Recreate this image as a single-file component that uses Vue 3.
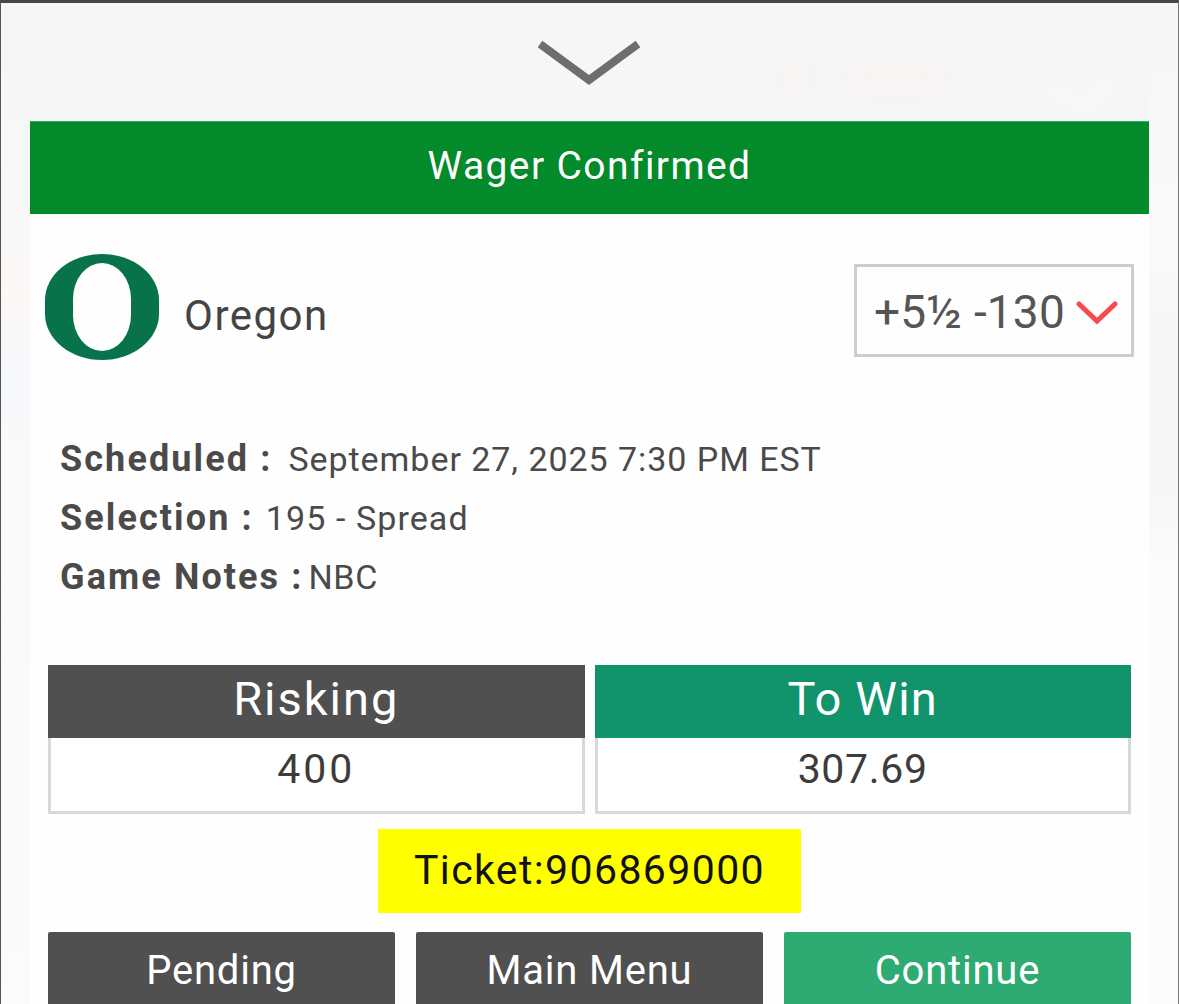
<script setup>
const details = [
  { label: 'Scheduled :', value: 'September 27, 2025 7:30 PM EST', cls: 'v1' },
  { label: 'Selection :', value: '195 - Spread', cls: 'v2' },
  { label: 'Game Notes :', value: 'NBC', cls: 'v3' }
]
const buttons = [
  { text: 'Pending', cls: '' },
  { text: 'Main Menu', cls: '' },
  { text: 'Continue', cls: 'go' }
]
</script>

<template>
  <div class="screen">
    <div class="handle">
      <svg class="ghosts" width="1177" height="118" viewBox="0 0 1177 118" aria-hidden="true">
        <g fill="none" stroke="#f8f8f8" stroke-width="6">
          <path d="M44 130 V90 C44 30 162 30 162 90 V130" />
          <path d="M255 110 C255 10 365 10 365 110 Z" />
          <path d="M435 100 C435 30 545 30 545 100 V130" />
        </g>
        <g fill="#f8f4f3">
          <rect x="783" y="52" width="22" height="46" rx="8" />
          <rect x="848" y="60" width="92" height="30" rx="10" />
        </g>
        <path d="M1046 84 L1082 104 L1112 78" fill="none" stroke="#f9f9f9" stroke-width="14" />
      </svg>
      <svg class="chev" width="104" height="50" viewBox="0 0 104 50">
        <path d="M2 5 L51 41 L100 5" fill="none" stroke="#6e6e6e" stroke-width="8" />
      </svg>
    </div>
    <main class="sheet">
      <h1 class="banner">Wager Confirmed</h1>
      <section class="card">
        <div class="team-row">
          <div class="team">
            <svg class="logo" width="114" height="106" viewBox="0 0 114 106">
              <rect x="0" y="0" width="114" height="106" rx="57" ry="46" fill="#08724a" />
              <rect x="28" y="9" width="58" height="88" rx="29" ry="36" fill="#fefefe" />
            </svg>
            <span class="team-name">Oregon</span>
          </div>
          <div class="odds">
            <span>+5½ -130</span>
            <svg width="42" height="26" viewBox="0 0 42 26">
              <path d="M3 4 L21 21 L39 4" fill="none" stroke="#f9494f" stroke-width="5" stroke-linecap="round" />
            </svg>
          </div>
        </div>
        <dl class="details">
          <div v-for="d in details" :key="d.label" class="line">
            <dt>{{ d.label }}</dt>
            <dd :class="d.cls">{{ d.value }}</dd>
          </div>
        </dl>
        <div class="amounts">
          <div class="amount">
            <div class="amount-head">Risking</div>
            <div class="amount-val wide">400</div>
          </div>
          <div class="amount">
            <div class="amount-head win">To Win</div>
            <div class="amount-val">307.69</div>
          </div>
        </div>
        <div class="ticket">Ticket:906869000</div>
        <div class="actions">
          <button v-for="b in buttons" :key="b.text" class="btn" :class="b.cls">{{ b.text }}</button>
        </div>
      </section>
    </main>
  </div>
</template>

<style>
html, body { margin: 0; height: 100%; background: #f6f6f6; overflow: hidden; }
</style>

<style scoped>
.screen {
  box-sizing: border-box;
  width: 1179px;
  height: 1004px;
  overflow: hidden;
  background:
    linear-gradient(180deg, #f6f6f6 0, #f8f8f8 214px, #fdf7f6 290px, #f6f8fc 370px, #f9f9fa 440px, #fbfbfb 1004px) left top / 30px 100% no-repeat,
    linear-gradient(180deg, #f6f6f6 0, #fafafa 250px, #f6f6f6 330px, #f6f6f6 470px, #fbfbfb 560px) right top / 30px 100% no-repeat,
    #f6f6f6;
  border-top: 3px solid #464646;
  border-left: 1px solid #555;
  border-right: 1px solid #777;
  font-family: Roboto, "Liberation Sans", sans-serif;
  color: #4a4a4a;
}
.handle {
  position: relative;
  height: 118px;
  display: flex;
  justify-content: center;
  padding-top: 36px;
  box-sizing: border-box;
}
.ghosts {
  position: absolute;
  left: 0;
  top: 0;
  filter: blur(6px);
}
.chev { position: relative; }
.sheet { margin: 0 29px; position: relative; }
.banner {
  margin: 0;
  height: 93px;
  box-sizing: border-box;
  border-top: 1px solid #2fae58;
  background: #038a2a;
  color: #fff;
  font-size: 39px;
  font-weight: 400;
  letter-spacing: 1.4px;
  padding-bottom: 4px;
  display: flex;
  align-items: center;
  justify-content: center;
}
.card {
  background: #fefefe;
  height: 800px;
  padding: 40px 15px 0 15px;
  box-sizing: border-box;
}
.team-row {
  display: flex;
  justify-content: space-between;
  align-items: flex-start;
}
.team { display: flex; align-items: center; gap: 25px; }
.team-name { font-size: 42px; color: #444; letter-spacing: 1.5px; padding-top: 17px; }
.odds {
  box-sizing: border-box;
  width: 280px;
  height: 93px;
  margin-top: 10px;
  padding: 2px 0 0 4px;
  border: 3px solid #cdcdcd;
  display: flex;
  align-items: center;
  justify-content: center;
  gap: 11px;
  font-size: 46px;
  color: #555;
  letter-spacing: 0.2px;
}
.odds svg { margin-top: 3px; }
.details { margin: 70px 0 0 15px; }
.line {
  display: flex;
  align-items: baseline;
  height: 59px;
  line-height: 59px;
  font-size: 36px;
  color: #4a4a4a;
}
dt { font-weight: 700; white-space: pre; letter-spacing: 2.1px; }
dd { margin: 0 0 0 16px; font-size: 34px; letter-spacing: 0.95px; }
dd.v2 { margin-left: 12px; letter-spacing: 1.1px; }
dd.v3 { margin-left: 5px; letter-spacing: 0.6px; }
.amounts {
  display: flex;
  gap: 10px;
  margin: 58px 3px 0 3px;
  width: 1083px;
}
.amount { flex: 1; }
.amount-head {
  height: 73px;
  background: #505050;
  color: #fff;
  font-size: 47px;
  letter-spacing: 2px;
  padding-bottom: 6px;
  box-sizing: border-box;
  display: flex;
  align-items: center;
  justify-content: center;
}
.amount-head.win { background: #11936b; letter-spacing: 1.2px; }
.amount-val {
  box-sizing: border-box;
  height: 76px;
  background: #fff;
  border: 3px solid #d8d8d8;
  border-top: 0;
  font-size: 41px;
  color: #3c3c3c;
  padding-bottom: 12px;
  display: flex;
  align-items: center;
  justify-content: center;
  letter-spacing: 0.7px;
}
.amount-val.wide { letter-spacing: 3px; }
.ticket {
  box-sizing: border-box;
  width: 423px;
  height: 84px;
  margin: 15px auto 0;
  padding-bottom: 2px;
  background: #ffff00;
  color: #111;
  font-size: 41px;
  letter-spacing: 1.4px;
  display: flex;
  align-items: center;
  justify-content: center;
}
.actions {
  display: flex;
  gap: 21px;
  margin: 19px 3px 0 3px;
  width: 1083px;
}
.btn {
  flex: 1;
  height: 110px;
  border: 0;
  border-radius: 2px;
  background: #505050;
  color: #fff;
  font-family: inherit;
  font-size: 40px;
  letter-spacing: 0.8px;
  padding: 0 0 34px;
}
.btn.go { background: #2eaa73; }
</style>
